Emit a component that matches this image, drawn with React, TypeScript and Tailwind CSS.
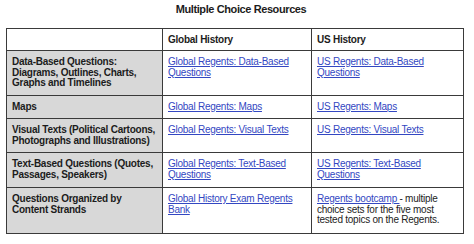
const ROWS = [
  {
    label: 'Data-Based Questions: Diagrams, Outlines, Charts, Graphs and Timelines',
    global: 'Global Regents: Data-Based Questions',
    us: 'US Regents: Data-Based Questions',
    h: 'h-[45px]',
  },
  { label: 'Maps', global: 'Global Regents: Maps', us: 'US Regents: Maps', h: 'h-[23px]' },
  {
    label: 'Visual Texts (Political Cartoons, Photographs and Illustrations)',
    global: 'Global Regents: Visual Texts',
    us: 'US Regents: Visual Texts',
    h: 'h-[34px]',
  },
  {
    label: 'Text-Based Questions (Quotes, Passages, Speakers)',
    global: 'Global Regents: Text-Based Questions',
    us: 'US Regents: Text-Based Questions',
    h: 'h-[35px]',
  },
]

const cell = 'border border-[#3a3a3a] align-top px-[5px] pt-[6px] pb-[4px]'
const link = 'text-[#3347c2] underline underline-offset-[1px] decoration-[#3347c2]'

export default function App() {
  return (
    <div className="w-[474px] h-[244px] bg-white text-[#1c1c1c] font-['Liberation_Sans',Arial,sans-serif] text-[10px] leading-[10.7px] tracking-[-0.25px]">
      <div className="pt-[2px] pl-[8px] text-center font-bold text-[11px] leading-[14px] tracking-[-0.4px]">
        Multiple Choice Resources
      </div>
      <table className="mt-[12px] ml-[6px] border-collapse table-fixed w-[457px]">
        <colgroup>
          <col className="w-[156px]" />
          <col className="w-[149px]" />
          <col className="w-[152px]" />
        </colgroup>
        <tbody>
          <tr className="h-[22px]">
            <td className={cell}></td>
            <td className={`${cell} font-bold`}>Global History</td>
            <td className={`${cell} font-bold`}>US History</td>
          </tr>
          {ROWS.map(r => (
            <tr key={r.label} className={r.h}>
              <td className={`${cell} bg-[#d8d8d8] font-bold`}>{r.label}</td>
              <td className={cell}><span className={link}>{r.global}</span></td>
              <td className={cell}><span className={link}>{r.us}</span></td>
            </tr>
          ))}
          <tr className="h-[46px]">
            <td className={`${cell} bg-[#d8d8d8] font-bold`}>Questions Organized by Content Strands</td>
            <td className={cell}><span className={link}>Global History Exam Regents Bank</span></td>
            <td className={cell}>
              <span className={link}>Regents bootcamp </span> - multiple choice sets for the five most tested topics on the Regents.
            </td>
          </tr>
        </tbody>
      </table>
    </div>
  )
}
